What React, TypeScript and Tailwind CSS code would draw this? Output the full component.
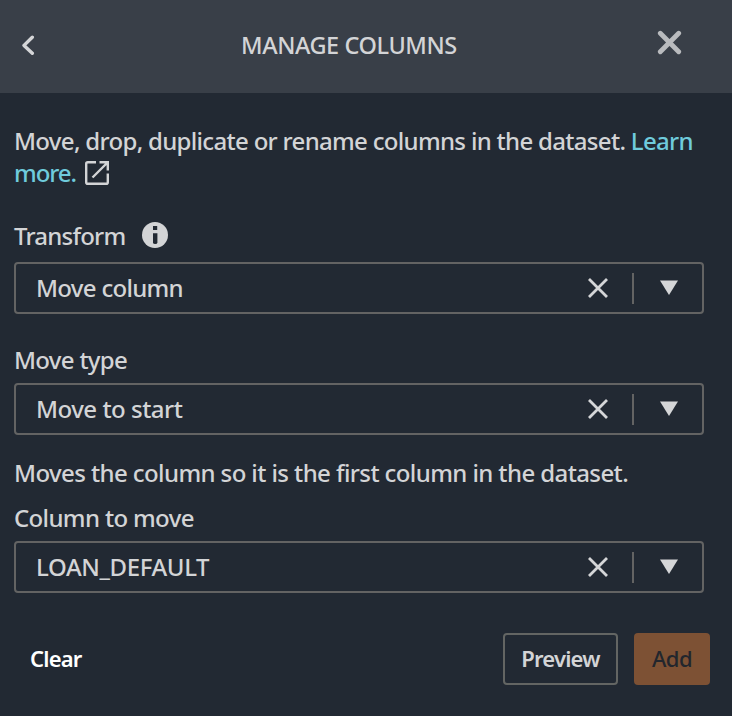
import type { ReactNode } from "react";

function Label({ children, className }: { children: ReactNode; className: string }) {
  return <div className={`flex h-8 items-center whitespace-nowrap ${className}`}>{children}</div>;
}

function SelectBox({ value, className }: { value: string; className: string }) {
  return (
    <div className="flex h-[52px] w-[690px] items-center rounded-[4px] border-2 border-[#636363] pl-5">
      <span className={`grow whitespace-nowrap ${className}`}>{value}</span>
      <svg className="mr-[23px] h-[22px] w-[22px]" viewBox="0 0 22 22" fill="none" stroke="#d5d6d8" strokeWidth="2.8">
        <path d="M2 2L20 20M20 2L2 20" />
      </svg>
      <div className="h-[31px] w-[2px] bg-[#636363]" />
      <svg className="mr-[24px] ml-[26px] h-[16px] w-[18px]" viewBox="0 0 18 16" fill="#d5d6d8">
        <path d="M0 0.5H18L9 15Z" />
      </svg>
    </div>
  );
}

export default function App() {
  return (
    <div className="h-[716px] w-[732px] overflow-hidden bg-[#222933] font-['Noto_Sans',sans-serif] text-[24px] leading-8 font-medium text-[#d3d4d6]">
      <header className="flex h-[93px] items-center bg-[#393f48]">
        <svg className="mb-[2px] ml-[21px] h-[22px] w-[14px]" viewBox="0 0 14 22" fill="none" stroke="#d5d6d8" strokeWidth="3.4" strokeLinecap="round" strokeLinejoin="round">
          <path d="M11.3 2.2L3 10.4L11.3 18.3" />
        </svg>
        <h1 className="mb-[3px] ml-[206px] w-[218px] text-[23.5px] tracking-[-0.42px] whitespace-nowrap">MANAGE COLUMNS</h1>
        <svg className="mb-[8px] ml-[198px] h-[26px] w-[26px]" viewBox="0 0 26 26" fill="none" stroke="#b9bbbe" strokeWidth="4.8" strokeLinecap="round">
          <path d="M3.3 3.2L21.7 21.8M21.7 3.2L3.3 21.8" />
        </svg>
      </header>
      <main className="pt-[32px] pl-[14px]">
        <div className="whitespace-nowrap">
          <p className="tracking-[-0.69px]">
            Move, drop, duplicate or rename columns in the dataset. <a className="text-[#6fcbdc]">Learn</a>
          </p>
          <p className="flex h-8 items-center">
            <a className="w-[71px] tracking-[-1.1px] text-[#6fcbdc]">more.</a>
            <svg className="h-[24px] w-[24px]" viewBox="0 0 24 24" fill="none" stroke="#d3d4d6" strokeWidth="2.4">
              <path d="M11 1.2H2.8Q1.2 1.2 1.2 2.8V21.2Q1.2 22.8 2.8 22.8H21.2Q22.8 22.8 22.8 21.2V12.5" />
              <path d="M7.5 16.5L22 2M14.5 1.2H22.8V9.5" />
            </svg>
          </p>
        </div>
        <Label className="mt-[31px] mb-[10px]">
          <span className="w-[128px] tracking-[-0.8px]">Transform</span>
          <svg className="mb-[3px] h-[26px] w-[26px]" viewBox="0 0 26 26">
            <circle cx="13" cy="13" r="13" fill="#d3d4d6" />
            <rect x="11" y="4" width="4.2" height="4" fill="#222933" />
            <path d="M11 11.2H15.4V20.5Q15.4 22 13.2 22Q11 22 11 20.5Z" fill="#222933" />
          </svg>
        </Label>
        <SelectBox value="Move column" className="tracking-[-0.7px]" />
        <Label className="mt-[30px] mb-[7px] tracking-[-0.7px]">Move type</Label>
        <SelectBox value="Move to start" className="tracking-[-0.5px]" />
        <p className="mt-[22px] whitespace-nowrap tracking-[-0.6px]">Moves the column so it is the first column in the dataset.</p>
        <Label className="mt-[13px] mb-[7px] tracking-[-0.65px]">Column to move</Label>
        <SelectBox value="LOAN_DEFAULT" className="tracking-[-0.38px]" />
        <div className="mt-[40px] flex h-[52px] items-center text-[22px]">
          <button className="mb-[2px] ml-[16px] w-[52px] text-left font-semibold tracking-[-0.8px] text-white">Clear</button>
          <button className="ml-[421px] h-[52px] w-[115px] rounded-[4px] border-2 border-[#636563] pb-[2px] font-semibold tracking-[-0.8px]">Preview</button>
          <button className="ml-4 h-[52px] w-[76px] rounded-[4px] bg-[#7d5134] pb-[2px] tracking-[-0.5px] text-[#22262d]">Add</button>
        </div>
      </main>
    </div>
  );
}
